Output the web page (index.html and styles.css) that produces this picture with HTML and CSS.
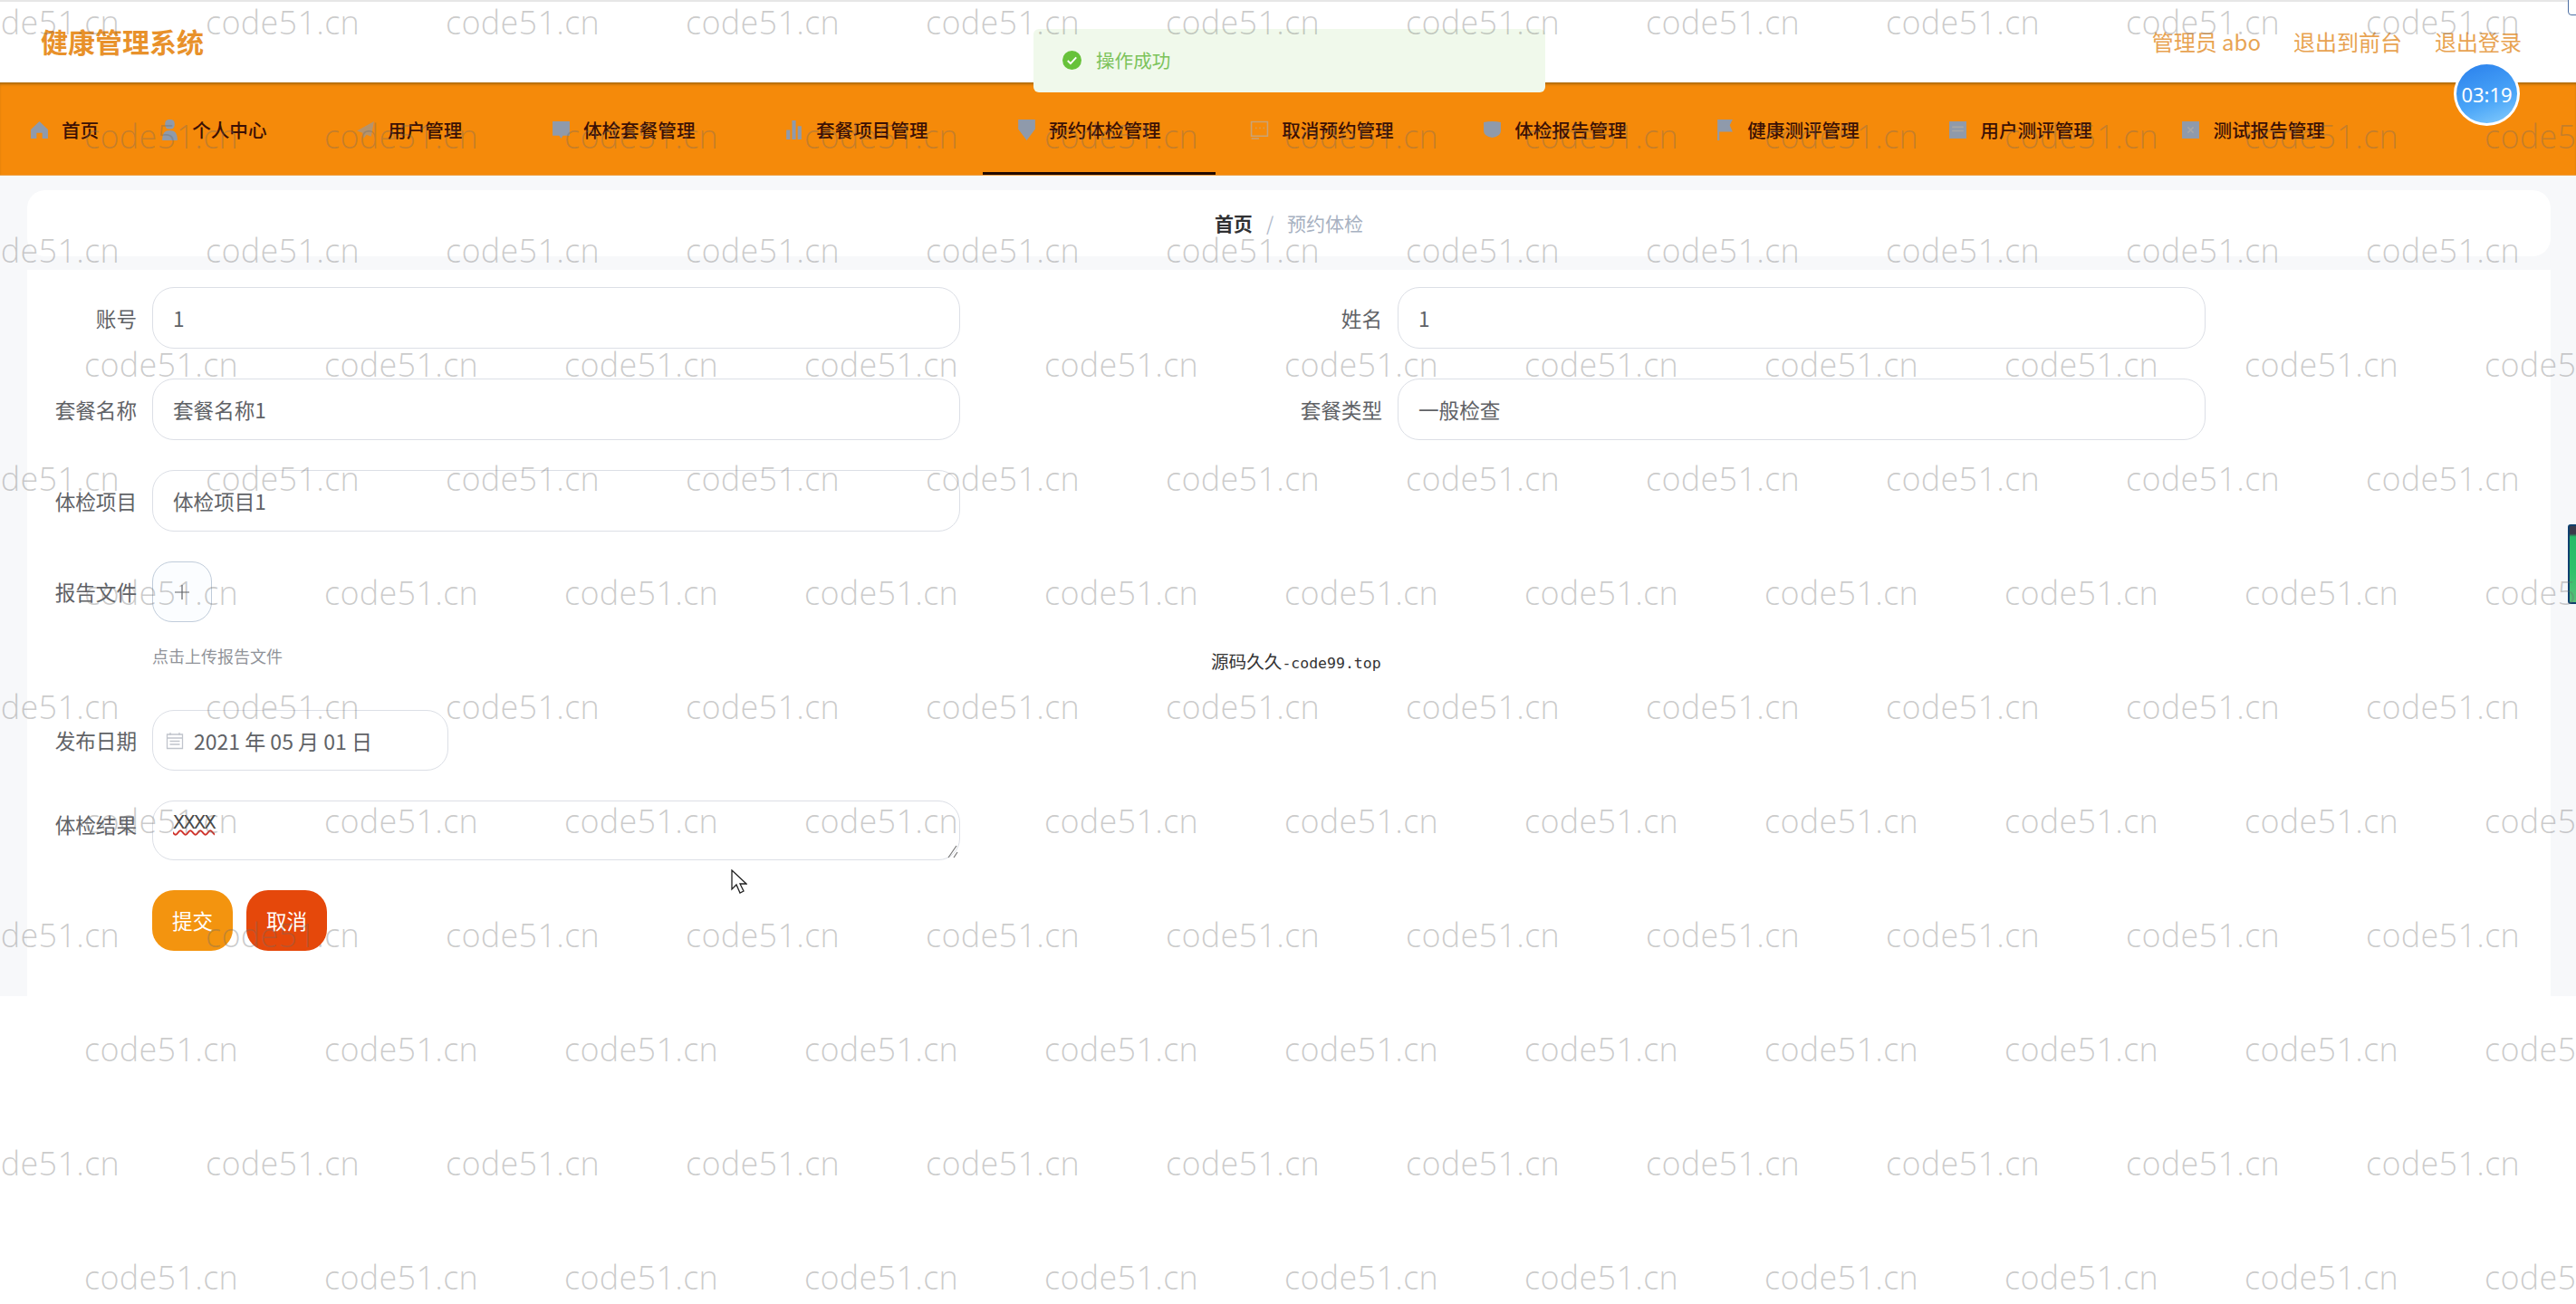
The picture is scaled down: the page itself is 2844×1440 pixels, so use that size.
FILE: index.html
```html
<!DOCTYPE html>
<html lang="zh-CN">
<head>
  <meta charset="UTF-8" />
  <title>健康管理系统</title>
  <link rel="stylesheet" href="styles.css">
</head>
<body>

  <div class="top">
    <div class="logo">健康管理系统</div>
    <div class="top-links">
      <span>管理员 abo</span>
      <span>退出到前台</span>
      <span>退出登录</span>
    </div>
  </div>

  <div class="nav">
    <div class="nav-item first">
      <svg class="nav-icon" viewBox="0 0 20 20"><path d="M10 1 19 9.500V19h-6v-6H7v6H1V9.500z"/></svg>
      <span>首页</span>
    </div>
    <div class="nav-item">
      <svg class="nav-icon tall" viewBox="0 0 20 24"><rect x="5" y="1" width="10" height="10" rx="4"/><path d="M2 23c0-8 3-10.500 8-10.500s8 2.500 8 10.500z"/></svg>
      <span>个人中心</span>
    </div>
    <div class="nav-item">
      <svg class="nav-icon faint" viewBox="0 0 20 20"><path d="M19 1 1 11l6 2 1 6 3-4 5 2z"/></svg>
      <span>用户管理</span>
    </div>
    <div class="nav-item">
      <svg class="nav-icon" viewBox="0 0 20 20"><path d="M1 1h18v15h-7l-2 3-2-3H1z"/></svg>
      <span>体检套餐管理</span>
    </div>
    <div class="nav-item">
      <svg class="nav-icon tall" viewBox="0 0 20 24"><path d="M2 12h4v10H2zM8 2h4v20H8zM14 8h4v14h-4z"/></svg>
      <span>套餐项目管理</span>
    </div>
    <div class="nav-item active">
      <svg class="nav-icon tall" viewBox="0 0 20 24"><path d="M1 1h18v10l-9 12-9-12z"/></svg>
      <span>预约体检管理</span>
    </div>
    <div class="nav-item">
      <svg class="nav-icon outline" viewBox="0 0 20 20"><path d="M1.500 1.500h17v15h-17zM1.500 19h8M6 8h1M10 8h1M14 8h1"/></svg>
      <span>取消预约管理</span>
    </div>
    <div class="nav-item">
      <svg class="nav-icon" viewBox="0 0 20 20"><path d="M1 2q9-2 18 0v9q0 6-9 7-9-1-9-7z"/></svg>
      <span>体检报告管理</span>
    </div>
    <div class="nav-item">
      <svg class="nav-icon tall" viewBox="0 0 20 24"><path d="M2 1h16l-3 6 3 7H4v9H2z"/></svg>
      <span>健康测评管理</span>
    </div>
    <div class="nav-item">
      <svg class="nav-icon" viewBox="0 0 20 20"><path d="M1 1h18v18H1z"/><path class="cut" d="M4 7h12M4 11h12"/></svg>
      <span>用户测评管理</span>
    </div>
    <div class="nav-item">
      <svg class="nav-icon" viewBox="0 0 20 20"><path d="M1 1h18v18H1z"/><path class="cut" d="m7 7 6 6M13 7l-6 6"/></svg>
      <span>测试报告管理</span>
    </div>
  </div>

  <div class="content">
    <div class="breadcrumb">
      <span class="crumb-home">首页</span>
      <span class="crumb-sep">/</span>
      <span class="crumb-now">预约体检</span>
    </div>

    <div class="form">
      <div class="form-row">
        <div class="form-item">
          <label>账号</label>
          <div class="field">1</div>
        </div>
        <div class="form-item">
          <label>姓名</label>
          <div class="field">1</div>
        </div>
      </div>

      <div class="form-row">
        <div class="form-item">
          <label>套餐名称</label>
          <div class="field">套餐名称1</div>
        </div>
        <div class="form-item">
          <label>套餐类型</label>
          <div class="field">一般检查</div>
        </div>
      </div>

      <div class="form-item">
        <label>体检项目</label>
        <div class="field">体检项目1</div>
      </div>

      <div class="form-item upload-item">
        <label>报告文件</label>
        <div>
          <div class="upload">
            <svg viewBox="0 0 20 20"><path d="M10 2v16M2 10h16"/></svg>
          </div>
          <div class="upload-tip">点击上传报告文件</div>
        </div>
      </div>

      <div class="form-item">
        <label>发布日期</label>
        <div class="field date-field">
          <svg class="date-icon" viewBox="0 0 20 20"><path d="M1.500 3h17v15.500h-17zM1.500 7h17M5 1v3M15 1v3M4.500 10.500h11M4.500 14h11"/></svg>
          <span>2021 年 05 月 01 日</span>
        </div>
      </div>

      <div class="form-item textarea-item">
        <label>体检结果</label>
        <div class="field textarea-field">
          <span class="misspelt">XXXX</span>
          <svg class="resize-grip" viewBox="0 0 12 16"><path d="m1 15 9-13M7 15l4-6"/></svg>
        </div>
      </div>

      <div class="buttons">
        <button class="btn-submit">提交</button>
        <button class="btn-cancel">取消</button>
      </div>
    </div>
  </div>

  <!-- overlays -->
  <div class="toast">
    <svg class="toast-icon" viewBox="0 0 20 20"><circle cx="10" cy="10" r="10"/><path d="m5.500 10.500 3 3 6-6.500"/></svg>
    <span>操作成功</span>
  </div>

  <div class="timer">03:19</div>
  <div class="corner-tab"></div>
  <div class="side-tab"></div>
  <div class="site-note"><span class="site-note-cn">源码久久</span>-code99.top</div>

  <svg class="cursor" viewBox="0 0 18 27"><path d="M1 1v21l5-5 4 9 4-2-4-8h7z"/></svg>

  <div class="watermark" id="watermark"></div>

  <script src="watermark.js"></script>
</body>
</html>
```

FILE: styles.css
```css
* {
  margin: 0;
  padding: 0;
  box-sizing: border-box;
  font-family: "Noto Sans CJK SC", "Noto Sans", sans-serif;
}

html, body {
  height: 100%;
  overflow: hidden;
}

body {
  background: white;
  position: relative;
}

/* top bar */
.top {
  height: 91px;
  background: white;
  border-top: 2px solid #e6e6e6;
  display: flex;
  align-items: center;
  justify-content: space-between;
  padding: 0 60px 0 45px;
}

.logo {
  font-size: 30px;
  font-weight: bold;
  color: #e8912a;
  margin-top: -3px;
}

.top-links {
  display: flex;
  gap: 36px;
  margin-top: -3px;
  font-size: 24px;
  color: #e8a352;
}

/* nav */
.nav {
  height: 103px;
  padding-top: 2px;
  background: #f58a0a;
  display: flex;
  box-shadow: inset 0 3px 3px -1px #a9690f;
  border-bottom: 1px solid #eda24a;
}

.nav-item {
  display: flex;
  align-items: center;
  gap: 14px;
  padding: 0 60.5px 0 38px;
  font-size: 20.6px;
  font-weight: 500;
  color: #3b1005;
  white-space: nowrap;
}

.nav-item.first {
  padding: 0 30px 0 33px;
}

.nav-item.active {
  box-shadow: inset 0 -3px 0 #200800;
}

.nav-icon {
  width: 21px;
  height: 21px;
  flex-shrink: 0;
  fill: #8f9aab;
}

.nav-icon.tall {
  height: 25px;
}

.nav-icon.faint {
  opacity: 0.6;
}

.nav-icon.outline {
  fill: none;
  stroke: #c9a376;
  stroke-width: 1.5;
}

.nav-icon .cut {
  fill: none;
  stroke: #a9a7a5;
  stroke-width: 1.5;
}

/* content */
.content {
  height: 906px;
  background: #f7f8fa;
  padding: 16px 28px 0 30px;
}

.breadcrumb {
  height: 73px;
  padding-bottom: 2px;
  background: white;
  border-radius: 20px;
  display: flex;
  align-items: center;
  justify-content: center;
  gap: 15px;
  font-size: 21px;
}

.crumb-home {
  font-weight: bold;
  color: #303133;
}

.crumb-sep {
  color: #b4bccc;
}

.crumb-now {
  color: #a8b2c2;
}

/* form */
.form {
  height: 802px;
  margin-top: 15px;
  background: white;
  padding-top: 19px;
  display: flex;
  flex-direction: column;
  gap: 33px;
}

.form-row {
  display: grid;
  grid-template-columns: 1375px 1fr;
}

.form-item {
  display: flex;
  align-items: center;
  gap: 17px;
  font-size: 22.6px;
}

.form-item label {
  width: 121px;
  text-align: right;
  color: #606266;
  white-space: nowrap;
}

.field {
  width: 892px;
  height: 68px;
  display: flex;
  align-items: center;
  padding: 0 22px;
  background: white;
  border: 1.5px solid #dcdfe6;
  border-radius: 24px;
  color: #606266;
}

.upload-item {
  height: 131px;
  align-items: flex-start;
}

.upload-item label {
  margin-top: 17px;
}

.upload {
  width: 66px;
  height: 67px;
  display: flex;
  align-items: center;
  justify-content: center;
  background: #fbfdff;
  border: 1.5px solid #c0ccda;
  border-radius: 22px;
}

.upload svg {
  width: 20px;
  height: 20px;
  fill: none;
  stroke: #606266;
  stroke-width: 1.2;
}

.upload-tip {
  margin-top: 24px;
  font-size: 18px;
  color: #909399;
}

.date-field {
  width: 327px;
  height: 67px;
  padding: 0 14px;
  gap: 11px;
  font-size: 23px;
}

.date-icon {
  width: 20px;
  height: 20px;
  fill: none;
  stroke: #c0c4cc;
  stroke-width: 1.3;
}

.textarea-item {
  align-items: flex-start;
}

.textarea-item label {
  margin-top: 10px;
}

.textarea-field {
  position: relative;
  height: 66px;
  align-items: flex-start;
  padding-top: 12px;
}

.misspelt {
  font-family: "Liberation Mono", monospace;
  font-size: 22px;
  letter-spacing: -1.7px;
  color: #4a4a4a;
  line-height: 1.2;
  text-decoration: underline wavy #d0342c 1.5px;
}

.resize-grip {
  position: absolute;
  right: 1px;
  bottom: 1px;
  width: 12px;
  height: 16px;
  fill: none;
  stroke: #777;
  stroke-width: 1.2;
}

.buttons {
  display: flex;
  gap: 15px;
  padding-left: 138px;
}

button {
  width: 89px;
  height: 67px;
  border: none;
  border-radius: 24px;
  color: white;
  font-size: 22.6px;
}

.btn-submit {
  background: #f3940f;
}

.btn-cancel {
  background: #e5480b;
}

/* things floating over the page */
.toast {
  position: absolute;
  left: 1141px;
  top: 32px;
  width: 565px;
  height: 70px;
  display: flex;
  align-items: center;
  gap: 16px;
  padding: 0 0 2px 32px;
  background: #f0f9eb;
  border-radius: 6px;
  font-size: 20.6px;
  color: #7cc35a;
}

.toast-icon {
  width: 21px;
  height: 21px;
  fill: #67c23a;
}

.toast-icon path {
  fill: none;
  stroke: white;
  stroke-width: 1.8;
}

.timer {
  position: absolute;
  left: 2709px;
  top: 68px;
  width: 73px;
  height: 71px;
  display: flex;
  align-items: center;
  justify-content: center;
  border: 3px solid white;
  border-radius: 50%;
  background: linear-gradient(160deg, #2f86ee 10%, #4aa5f8 60%, #86cdfc 100%);
  font-size: 22px;
  color: white;
  font-family: "Noto Sans", sans-serif;
}

.corner-tab {
  position: absolute;
  right: -6px;
  top: -4px;
  width: 15px;
  height: 21px;
  background: white;
  border: 1.5px solid #4d6fa3;
  border-radius: 4px;
}

.side-tab {
  position: absolute;
  left: 2835px;
  top: 579px;
  width: 12px;
  height: 88px;
  background: linear-gradient(180deg, #3a3a4a 0, #3a3a4a 10%, #26b968 14%, #2fc16b 60%, #58c07a 100%);
  border: 2px solid #10406e;
  border-radius: 3px;
}

.site-note {
  position: absolute;
  left: 1337px;
  top: 718px;
  font-family: "DejaVu Sans Mono", monospace;
  font-size: 16.500px;
  line-height: 24px;
  color: #333;
  white-space: nowrap;
}

.site-note-cn {
  font-family: "Noto Sans CJK SC", sans-serif;
  font-size: 19.600px;
}

.cursor {
  position: absolute;
  left: 807px;
  top: 960px;
  width: 18px;
  height: 27px;
  fill: white;
  stroke: #222;
  stroke-width: 1.3;
}

.watermark {
  position: absolute;
  left: 0;
  right: 0;
  top: -38px;
  pointer-events: none;
  overflow: hidden;
}

.wm-row {
  height: 126px;
  line-height: 126px;
  margin-left: -38px;
  display: flex;
  gap: 96px;
  white-space: nowrap;
}

.wm-row.even {
  margin-left: 93px;
}

.wm-row span {
  width: 169px;
  flex-shrink: 0;
  font-family: "Open Sans", sans-serif;
  font-weight: 300;
  font-size: 36px;
  letter-spacing: 0.3px;
  color: rgba(105, 105, 105, 0.35);
}
```

FILE: watermark.js
```js
const watermark = document.getElementById('watermark');

for (let i = 0; i < 12; i++) {
  const row = document.createElement('div');
  row.className = i % 2 ? 'wm-row even' : 'wm-row';

  for (let j = 0; j < 12; j++) {
    const item = document.createElement('span');
    item.innerText = 'code51.cn';
    row.appendChild(item);
  }

  watermark.appendChild(row);
}
```
